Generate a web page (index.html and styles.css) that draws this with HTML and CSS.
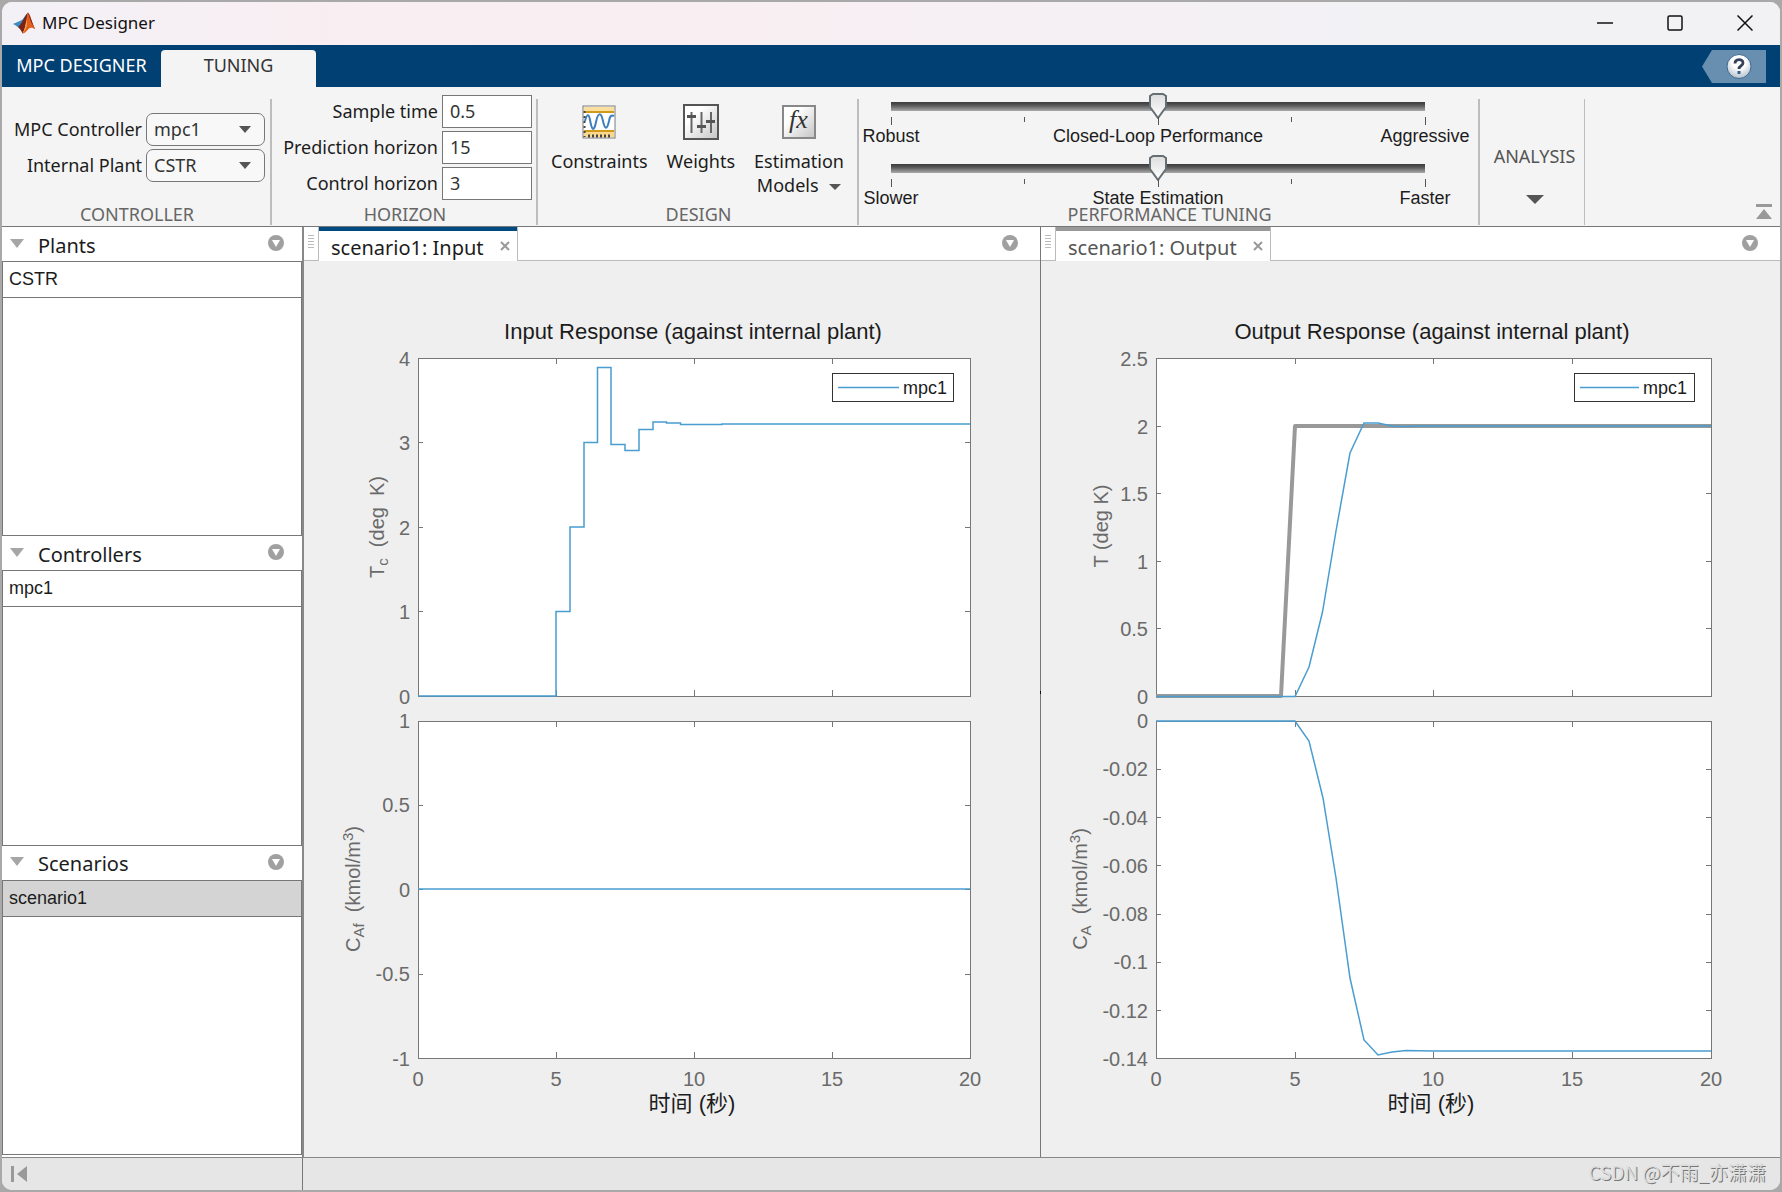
FILE: index.html
```html
<!DOCTYPE html>
<html lang="en">
<head>
<meta charset="utf-8">
<title>MPC Designer</title>
<link rel="stylesheet" href="styles.css">
</head>
<body>
<div class="window">
  <header class="titlebar">
    <svg class="logo" viewBox="0 0 24 24" aria-hidden="true">
      <path d="M1 13 L9 9.500 C11.500 8.500 13 4 16 1.500 C13.500 7 12 12 8 17 C5.500 16 4 14.500 1 13Z" fill="#3b8ac4"/>
      <path d="M6 16 C10 13 12 6 16 1.500 C15 8 14 17 10.500 22.500 C9.500 20 8.500 18.500 6 16Z" fill="#7a2418"/>
      <path d="M10.500 22.500 C14 18 14 6 16 1.500 C18.500 4 20.500 14 23.500 18.500 C20.500 16.500 18.500 16 16.500 18 C14.500 20 12.500 23 10.500 22.500Z" fill="#e2601f"/>
      <path d="M10.500 22.500 C13 19 13.500 14 14.500 9 C15.500 13 15 17.500 10.500 22.500Z" fill="#f9a941"/>
      <path d="M16 1.500 C18.500 4 20.500 14 23.500 18.500 C20 14 18 9 16 1.500Z" fill="#8c2416"/>
    </svg>
    <h1 class="title">MPC Designer</h1>
    <div class="window-buttons">
      <button aria-label="Minimize"><svg viewBox="0 0 16 16"><path d="M0 8H16"/></svg></button>
      <button aria-label="Maximize"><svg viewBox="0 0 16 16"><rect x="1" y="1" width="14" height="14" rx="1.500"/></svg></button>
      <button aria-label="Close"><svg viewBox="0 0 16 16"><path d="M0.500 0.500L15.500 15.500M15.500 0.500L0.500 15.500"/></svg></button>
    </div>
  </header>

  <nav class="ribbon-tabs">
    <button class="ribbon-tab">MPC DESIGNER</button>
    <button class="ribbon-tab active">TUNING</button>
    <button class="help" aria-label="Help">
      <svg viewBox="0 0 64 33">
        <defs><radialGradient id="ball" cx="0.5" cy="0.3" r="0.7"><stop offset="0.4" stop-color="#fff"/><stop offset="1" stop-color="#b4c0cc"/></radialGradient></defs>
        <path d="M10 0H64V33H10L0 16.500Z" fill="#688fb0"/>
        <circle cx="37" cy="16.500" r="12" fill="url(#ball)" stroke="#3c6890"/>
        <path d="M33 13.500C33 8.500 41 8.500 41 13C41 16 37 15.500 37 19" fill="none" stroke="#34405c" stroke-width="2.800"/>
        <rect x="35.500" y="21" width="3" height="3" fill="#34608c"/>
      </svg>
    </button>
  </nav>

  <section class="toolstrip">
    <div class="group group-controller">
      <div class="fields">
        <label for="ctrl">MPC Controller</label><select id="ctrl"><option>mpc1</option></select>
        <label for="plant">Internal Plant</label><select id="plant"><option>CSTR</option></select>
      </div>
      <h2 class="caption">CONTROLLER</h2>
    </div>
    <div class="group group-horizon">
      <div class="fields">
        <label for="ts">Sample time</label><input id="ts" type="text" value="0.5">
        <label for="ph">Prediction horizon</label><input id="ph" type="text" value="15">
        <label for="ch">Control horizon</label><input id="ch" type="text" value="3">
      </div>
      <h2 class="caption">HORIZON</h2>
    </div>
    <div class="group group-design">
      <div class="tools">
        <button class="tool">
          <svg viewBox="0 0 36 36">
            <rect x="2" y="2" width="32" height="32" fill="#fff" stroke="#7a7a7a"/>
            <rect x="3" y="3" width="30" height="5" fill="#fbdf9f"/><rect x="3" y="7" width="30" height="2" fill="#d19a1c"/>
            <rect x="3" y="27" width="30" height="6" fill="#fbd88c"/><rect x="3" y="26" width="30" height="2" fill="#d19a1c"/>
            <path d="M4 17C6 9 8 10 9 16C11 27 13 28 15 18C17 8 20 8 22 17C24 26 26 26 28 17C29 11 31 11 33 12" fill="none" stroke="#3d7dbd" stroke-width="2"/>
            <path d="M3.500 7V33" stroke="#444" stroke-width="2" stroke-dasharray="2 3" fill="none"/>
            <path d="M7 32H31" stroke="#444" stroke-width="3" stroke-dasharray="2 2" fill="none"/>
          </svg>
          <span>Constraints</span>
        </button>
        <button class="tool">
          <svg viewBox="0 0 36 36">
            <defs><linearGradient id="face" x1="0" y1="0" x2="1" y2="1"><stop offset="0.3" stop-color="#fff"/><stop offset="1" stop-color="#c4c4c4"/></linearGradient></defs>
            <rect x="1" y="1" width="34" height="34" fill="url(#face)" stroke="#555" stroke-width="2"/>
            <path d="M8.500 8V29M18.500 8V29M28 8V29" stroke="#666" stroke-width="2"/>
            <path d="M4 12.500H13M14 22.500H23M23 17.500H32" stroke="#555" stroke-width="3"/>
          </svg>
          <span>Weights</span>
        </button>
        <button class="tool">
          <svg viewBox="0 0 36 36">
            <rect x="2" y="2" width="32" height="32" fill="url(#face)" stroke="#888" stroke-width="2"/>
            <text x="8" y="24" class="fx">fx</text>
          </svg>
          <span>Estimation<br>Models <i class="arrow"></i></span>
        </button>
      </div>
      <h2 class="caption">DESIGN</h2>
    </div>
    <div class="group group-performance">
      <div class="slider">
        <input type="range" aria-label="Closed-Loop Performance" min="0" max="100" value="50">
        <div class="ticks"><span class="tick">Robust</span><span class="tick minor"></span><span class="tick">Closed-Loop Performance</span><span class="tick minor"></span><span class="tick">Aggressive</span></div>
      </div>
      <div class="slider">
        <input type="range" aria-label="State Estimation" min="0" max="100" value="50">
        <div class="ticks"><span class="tick">Slower</span><span class="tick minor"></span><span class="tick">State Estimation</span><span class="tick minor"></span><span class="tick">Faster</span></div>
      </div>
      <h2 class="caption">PERFORMANCE TUNING</h2>
    </div>
    <div class="group group-analysis">
      <button class="analysis">ANALYSIS<i class="arrow large"></i></button>
    </div>
    <button class="collapse" aria-label="Minimize toolstrip"><svg viewBox="0 0 16 16"><path d="M0 0H16V3H0ZM8 5L16 15H0Z" fill="#999"/></svg></button>
  </section>

  <main class="workspace">
    <aside class="sidebar">
      <section class="browser">
        <h3 class="browser-head"><i class="fold"></i>Plants<button class="menu" aria-label="Plants menu"><svg viewBox="0 0 16 16"><circle cx="8" cy="8" r="8"/><path d="M4 5H12L8 12Z"/></svg></button></h3>
        <ul class="list"><li>CSTR</li></ul>
      </section>
      <section class="browser">
        <h3 class="browser-head"><i class="fold"></i>Controllers<button class="menu" aria-label="Controllers menu"><svg viewBox="0 0 16 16"><circle cx="8" cy="8" r="8"/><path d="M4 5H12L8 12Z"/></svg></button></h3>
        <ul class="list"><li>mpc1</li></ul>
      </section>
      <section class="browser">
        <h3 class="browser-head"><i class="fold"></i>Scenarios<button class="menu" aria-label="Scenarios menu"><svg viewBox="0 0 16 16"><circle cx="8" cy="8" r="8"/><path d="M4 5H12L8 12Z"/></svg></button></h3>
        <ul class="list"><li class="selected">scenario1</li></ul>
      </section>
    </aside>

    <section class="document document-input">
      <div class="doc-bar">
        <span class="grip"></span>
        <div class="doc-tab current">scenario1: Input<button aria-label="Close tab"><svg viewBox="0 0 10 10"><path d="M1 1L9 9M9 1L1 9"/></svg></button></div>
        <button class="menu" aria-label="Document menu"><svg viewBox="0 0 16 16"><circle cx="8" cy="8" r="8"/><path d="M4 5H12L8 12Z"/></svg></button>
      </div>
      <svg class="figure" viewBox="0 0 736 896" role="img" aria-label="Input Response">
        <text class="plot-title" x="389" y="78">Input Response (against internal plant)</text>
        <rect class="axes" x="114" y="97" width="552" height="338"/>
        <rect class="axes" x="114" y="460" width="552" height="337"/>
        <path class="marks" d="M252 97v6M390 97v6M528 97v6M252 435v-6M390 435v-6M528 435v-6M114 181h5M114 266h5M114 350h5M666 181h-5M666 266h-5M666 350h-5"/>
        <path class="marks" d="M252 460v6M390 460v6M528 460v6M252 797v-6M390 797v-6M528 797v-6M114 544h5M114 628h5M114 713h5M666 544h-5M666 628h-5M666 713h-5"/>
        <g class="y-ticks"><text x="106" y="105">4</text><text x="106" y="189">3</text><text x="106" y="274">2</text><text x="106" y="358">1</text><text x="106" y="443">0</text>
          <text x="106" y="467">1</text><text x="106" y="551">0.5</text><text x="106" y="636">0</text><text x="106" y="720">-0.5</text><text x="106" y="805">-1</text></g>
        <g class="x-ticks"><text x="114" y="825">0</text><text x="252" y="825">5</text><text x="390" y="825">10</text><text x="528" y="825">15</text><text x="666" y="825">20</text></g>
        <text class="x-label" x="388" y="850">时间 (秒)</text>
        <text class="y-label" transform="translate(80 266) rotate(-90)">T<tspan class="sub" dy="4">c</tspan><tspan dy="-4">&#160; (deg&#160; K)</tspan></text>
        <text class="y-label" transform="translate(56 628) rotate(-90)">C<tspan class="sub" dy="4">Af</tspan><tspan dy="-4">&#160; (kmol/m</tspan><tspan class="sub" dy="-7">3</tspan><tspan dy="7">)</tspan></text>
        <path class="line" d="M114 435H252V350.500H266V266H280V181.500H293.500V106.500H307V183.500H321V189.500H335V168.500H349V161H362.500V162H376.500V163.500H418V163H666"/>
        <path class="line" d="M114 628H666"/>
        <rect class="legend" x="528" y="112" width="121" height="28"/>
        <path class="line" d="M534 126.500H595"/><text class="legend-text" x="599" y="133">mpc1</text>
      </svg>
    </section>

    <div class="divider"></div>

    <section class="document document-output">
      <div class="doc-bar">
        <span class="grip"></span>
        <div class="doc-tab">scenario1: Output<button aria-label="Close tab"><svg viewBox="0 0 10 10"><path d="M1 1L9 9M9 1L1 9"/></svg></button></div>
        <button class="menu" aria-label="Document menu"><svg viewBox="0 0 16 16"><circle cx="8" cy="8" r="8"/><path d="M4 5H12L8 12Z"/></svg></button>
      </div>
      <svg class="figure" viewBox="0 0 739 896" role="img" aria-label="Output Response">
        <text class="plot-title" x="391" y="78">Output Response (against internal plant)</text>
        <rect class="axes" x="115" y="97" width="555" height="338"/>
        <rect class="axes" x="115" y="460" width="555" height="337"/>
        <path class="marks" d="M254 97v6M392 97v6M531 97v6M254 435v-6M392 435v-6M531 435v-6M115 165h5M115 232h5M115 300h5M115 367h5M670 165h-5M670 232h-5M670 300h-5M670 367h-5"/>
        <path class="marks" d="M254 460v6M392 460v6M531 460v6M254 797v-6M392 797v-6M531 797v-6M115 508h5M115 556h5M115 604h5M115 653h5M115 701h5M115 749h5M670 508h-5M670 556h-5M670 604h-5M670 653h-5M670 701h-5M670 749h-5"/>
        <g class="y-ticks"><text x="107" y="105">2.5</text><text x="107" y="173">2</text><text x="107" y="240">1.5</text><text x="107" y="308">1</text><text x="107" y="375">0.5</text><text x="107" y="443">0</text>
          <text x="107" y="467">0</text><text x="107" y="515">-0.02</text><text x="107" y="564">-0.04</text><text x="107" y="612">-0.06</text><text x="107" y="660">-0.08</text><text x="107" y="708">-0.1</text><text x="107" y="757">-0.12</text><text x="107" y="805">-0.14</text></g>
        <g class="x-ticks"><text x="115" y="825">0</text><text x="254" y="825">5</text><text x="392" y="825">10</text><text x="531" y="825">15</text><text x="670" y="825">20</text></g>
        <text class="x-label" x="390" y="850">时间 (秒)</text>
        <text class="y-label" transform="translate(67 265) rotate(-90)">T (deg K)</text>
        <text class="y-label" transform="translate(46 628) rotate(-90)">C<tspan class="sub" dy="4">A</tspan><tspan dy="-4">&#160; (kmol/m</tspan><tspan class="sub" dy="-7">3</tspan><tspan dy="7">)</tspan></text>
        <path class="reference" d="M115 435H240L254 165H670"/>
        <path class="line" d="M115 435.500H254L268 406L281.500 351L295 270L309 192L323 162H337L351 165L365 165.500L379 165H670"/>
        <path class="line" d="M115 460H254L268 480L282 537L295 617L309 717L323 779L337 794L351 791L365 789.500L392 790H670"/>
        <rect class="legend" x="533" y="112" width="120" height="28"/>
        <path class="line" d="M539 126.500H598"/><text class="legend-text" x="602" y="133">mpc1</text>
      </svg>
    </section>
  </main>

  <footer class="statusbar">
    <div class="status-left"><button aria-label="Collapse browser"><svg viewBox="0 0 16 16"><path d="M0 0H3V16H0ZM16 0V16L6 8Z" fill="#999"/></svg></button></div>
    <p class="credit">CSDN @不雨_亦潇潇</p>
  </footer>
</div>
</body>
</html>
```
FILE: styles.css
```css
* { box-sizing: border-box; margin: 0; padding: 0; }

body {
  min-height: 100vh;
  display: flex;
  padding: 2px;
  background: #a9a9a9;
  color: #1c1c1c;
  font: 18px/24px "Noto Sans", "Noto Sans CJK SC", sans-serif;
}

button { border: 0; background: none; color: inherit; font: inherit; }
svg { display: block; }
h1, h2, h3 { font-weight: 400; }

.window {
  flex: 1;
  min-width: 0;
  display: flex;
  flex-direction: column;
  overflow: hidden;
  border-radius: 10px;
  background: #f4f4f4;
}

/* Title bar */
.titlebar {
  display: flex;
  align-items: center;
  height: 43px;
  padding: 0 27px 2px 10px;
  background: linear-gradient(90deg, #f3f1f6, #f9eef2 20%, #f8eff3 45%, #f2f2f5 80%);
}
.logo { width: 24px; height: 24px; margin-right: 6px; }
.title { font-size: 17px; color: #111; }
.window-buttons { display: flex; gap: 54px; margin-left: auto; }
.window-buttons svg { width: 16px; height: 16px; fill: none; stroke: #111; stroke-width: 1.5; }

/* Ribbon tabs */
.ribbon-tabs {
  display: flex;
  align-items: flex-end;
  height: 42px;
  padding-right: 14px;
  background: #004073;
}
.ribbon-tab { width: 159px; height: 37px; padding-bottom: 8px; color: #fff; }
.ribbon-tab.active {
  width: 155px;
  border-radius: 4px 4px 0 0;
  background: #f4f4f4;
  color: #333;
}
.help { align-self: center; margin-left: auto; }
.help svg { width: 64px; height: 33px; }

/* Toolstrip */
.toolstrip {
  display: flex;
  height: 140px;
  padding: 0 8px 1px 0;
  border-bottom: 1px solid #777;
}
.group {
  display: flex;
  flex-direction: column;
  justify-content: flex-end;
  position: relative;
}
.group::after {
  content: "";
  position: absolute;
  top: 12px;
  right: 0;
  bottom: 0;
  width: 2px;
  background: #bdbdbd;
}
.caption {
  padding: 4px 0 2px;
  color: #666;
  font-size: 18px;
  line-height: 18px;
  text-align: center;
}
.fields {
  display: grid;
  grid-template-columns: 1fr auto;
  align-items: center;
  gap: 3px 4px;
  text-align: right;
}
.fields label { height: 26px; }
.group-controller { width: 270px; }
.group-controller .fields { padding: 0 7px 19px; }
.group-horizon { width: 266px; }
.group-horizon .fields { padding: 0 6px 1px; }
.fields select, .fields input {
  height: 33px;
  border: 1px solid #777;
  background: #fff;
  color: #333;
  font: inherit;
}
.fields input { width: 90px; padding: 0 7px 2px; }
.fields select {
  width: 119px;
  padding: 0 7px 2px;
  border-radius: 7px;
  appearance: none;
  background: #f8f8f8 url("data:image/svg+xml,%3Csvg xmlns='http://www.w3.org/2000/svg' width='12' height='7'%3E%3Cpath d='M0 0H12L6 7Z' fill='%23555'/%3E%3C/svg%3E") no-repeat right 13px center;
}
.arrow {
  display: inline-block;
  margin-left: 6px;
  border: 6px solid transparent;
  border-top-color: #555;
  border-bottom: 0;
  vertical-align: middle;
}

.group-design { width: 321px; }
.tools { display: flex; justify-content: center; gap: 19px; padding: 0 2px 4px 0; }
.tool { display: flex; flex-direction: column; align-items: center; gap: 9px; }
.tool svg { width: 36px; height: 36px; }
.tool span { line-height: 24px; white-space: nowrap; }
.fx { fill: #333; font: italic 26px "Liberation Serif", serif; }

.group-performance { flex: 1; max-width: 621px; }
.slider { display: flex; flex-direction: column; height: 62px; padding: 0 55px 0 32px; }
.slider + .slider { height: 46px; }
.slider input { flex: none; height: 26px; appearance: none; background: none; }
.slider input::-webkit-slider-runnable-track {
  height: 9px;
  background: linear-gradient(#3a3a3a, #555 35%, #aaa);
}
.slider input::-webkit-slider-thumb {
  width: 20px;
  height: 26px;
  margin-top: -9px;
  appearance: none;
  background: url("data:image/svg+xml,%3Csvg xmlns='http://www.w3.org/2000/svg' width='20' height='26'%3E%3ClinearGradient id='g' x1='0' y1='0' x2='0' y2='1'%3E%3Cstop stop-color='%23ddd'/%3E%3Cstop offset='1' stop-color='%23fff'/%3E%3C/linearGradient%3E%3Cpath d='M5 1H15L18 3V14L10 25L2 14V3Z' fill='url(%23g)' stroke='%23666f74' stroke-width='2'/%3E%3C/svg%3E");
}
.ticks { display: flex; justify-content: space-between; margin-top: -2px; }
.tick {
  display: flex;
  flex-direction: column;
  align-items: center;
  width: 0;
  font: 18px/18px "Liberation Sans", Arial, sans-serif;
  white-space: nowrap;
}
.tick::before { content: ""; width: 1px; height: 8px; margin-bottom: 2px; background: #555; }
.tick.minor::before { height: 5px; }

.group-analysis { width: 105px; justify-content: flex-start; padding: 57px 0 0 4px; }
.group-analysis::after { width: 1px; }
.analysis { display: flex; flex-direction: column; align-items: center; gap: 27px; color: #555; line-height: 24px; }
.arrow.large { margin: 0; border-width: 9px 9px 0; }
.collapse { align-self: flex-end; margin-left: auto; padding-bottom: 5px; }
.collapse svg { width: 16px; height: 16px; }

/* Workspace */
.workspace { flex: 1; display: flex; min-height: 0; }
.sidebar {
  flex: 0 0 302px;
  display: flex;
  flex-direction: column;
  padding-bottom: 2px;
  border-right: 2px solid #888;
  background: #fff;
}
.browser { flex: 1; display: flex; flex-direction: column; }
.browser-head {
  display: flex;
  align-items: center;
  height: 34px;
  padding: 3px 18px 0 8px;
  font-size: 20px;
}
.fold {
  margin: 0 14px 5px 0;
  border: 7px solid transparent;
  border-width: 9px 7px 0;
  border-top-color: #a6a6a6;
}
.menu { margin: 0 0 5px auto; }
.menu svg { width: 16px; height: 16px; }
.menu circle { fill: #a0a0a0; }
.menu path { fill: #fff; }
.list {
  flex: 1;
  border: 1px solid #777;
  list-style: none;
  font: 18px/34px "Liberation Sans", Arial, sans-serif;
}
.list li { height: 36px; padding-left: 6px; border: solid #777; border-width: 0 0 1px; }
.list .selected { background: #d4d4d4; }

.document { min-width: 0; display: flex; flex-direction: column; background: #efefef; }
.document-input { flex: 736; }
.document-output { flex: 739; }
.doc-bar {
  display: flex;
  align-items: center;
  height: 34px;
  padding-right: 22px;
  border-bottom: 1px solid #bbb;
  background: #fff;
}
.doc-bar .menu { margin-bottom: 2px; }
.grip {
  width: 6px;
  height: 15px;
  margin: 0 4px 3px;
  background: repeating-linear-gradient(#bbb 0 1px, #fff 1px 3px);
}
.doc-tab {
  display: flex;
  align-items: center;
  height: 34px;
  padding: 8px 7px 0 12px;
  border: solid #bbb;
  border-width: 0 1px;
  background: #fff;
  box-shadow: inset 0 4px #999;
  color: #555;
  font-size: 20px;
}
.doc-tab.current { box-shadow: inset 0 4px #004a84; color: #1c1c1c; }
.doc-tab button { margin: 0 0 4px 16px; }
.doc-tab svg { width: 10px; height: 10px; stroke: #999; stroke-width: 2; }
.divider {
  display: flex;
  align-items: center;
  width: 1px;
  background: #777;
}
.divider::after { content: ""; flex: 0 0 2px; height: 3px; background: #111; }

/* Plots */
.figure {
  flex: 1 1 0;
  width: 100%;
  height: 0;
  min-height: 480px;
  font: 20px "Liberation Sans", Arial, "Noto Sans CJK SC", sans-serif;
  fill: #6a6a6a;
}
.plot-title, .x-label { fill: #1c1c1c; font-size: 22px; text-anchor: middle; }
.y-ticks { text-anchor: end; }
.x-ticks, .y-label { text-anchor: middle; }
.sub { font-size: 15px; }
.axes { fill: #fff; stroke: #777; shape-rendering: crispEdges; }
.marks { fill: none; stroke: #777; shape-rendering: crispEdges; }
.line { fill: none; stroke: #4a9dd0; stroke-width: 1.5; }
.reference { fill: none; stroke: #999; stroke-width: 4; stroke-linejoin: round; }
.legend { fill: #fff; stroke: #333; shape-rendering: crispEdges; }
.legend-text { fill: #1c1c1c; font-size: 18px; }

/* Status bar */
.statusbar {
  display: flex;
  height: 33px;
  border-top: 1px solid #888;
  background: #e6e6e6;
}
.status-left {
  display: flex;
  align-items: center;
  width: 301px;
  padding-left: 9px;
  border-right: 1px solid #777;
}
.status-left svg { width: 16px; height: 16px; }
.credit {
  margin-left: auto;
  padding-right: 14px;
  color: #ddd;
  font: 19px/28px "Noto Sans CJK SC", sans-serif;
  text-shadow: 1px 1px 0 #777;
}
```
